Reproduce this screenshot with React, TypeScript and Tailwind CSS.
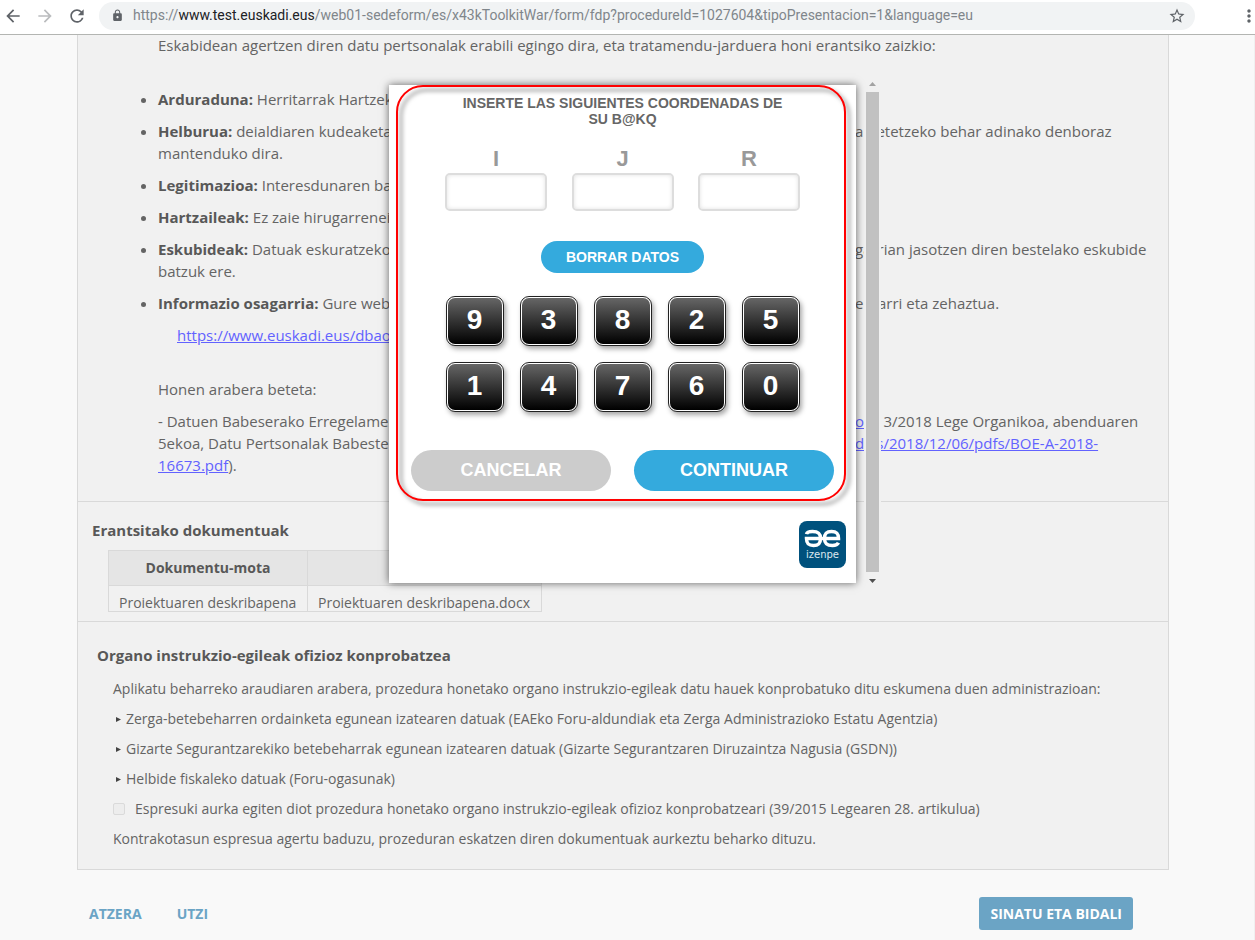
import type { ReactNode } from 'react'
import { MdArrowBack, MdArrowForward, MdRefresh, MdLock, MdStarBorder, MdMoreVert } from 'react-icons/md'

const coordinates = ['I', 'J', 'R']
const keypad = [9, 3, 8, 2, 5, 1, 4, 7, 6, 0]

const checks = [
  'Zerga-betebeharren ordainketa egunean izatearen datuak (EAEko Foru-aldundiak eta Zerga Administrazioko Estatu Agentzia)',
  'Gizarte Segurantzarekiko betebeharrak egunean izatearen datuak (Gizarte Segurantzaren Diruzaintza Nagusia (GSDN))',
  'Helbide fiskaleko datuak (Foru-ogasunak)',
]

function AddressBar() {
  return (
    <header className="flex h-[35px] items-center border-b border-[#b3b5b2] bg-white pb-[3px] text-[#5f6368]">
      <button type="button" aria-label="Back" className="ml-[3px] w-5">
        <MdArrowBack className="h-5 w-5" />
      </button>
      <button type="button" aria-label="Forward" className="ml-3 w-5 text-[#babcbe]">
        <MdArrowForward className="h-5 w-5" />
      </button>
      <button type="button" aria-label="Reload" className="ml-3 w-5">
        <MdRefresh className="h-5 w-5" />
      </button>
      <div className="ml-3 flex h-7 min-w-0 flex-1 items-center rounded-full bg-[#f1f3f4] pl-3 pr-[9px]">
        <MdLock className="h-[13px] w-[13px] shrink-0" />
        <span className="ml-[9px] flex-1 truncate font-[Roboto] text-[14px] text-[#80868b]">
          https://<span className="text-[#202124]">www.test.euskadi.eus</span>
          /web01-sedeform/es/x43kToolkitWar/form/fdp?procedureId=1027604&amp;tipoPresentacion=1&amp;language=eu
        </span>
        <button type="button" aria-label="Bookmark">
          <MdStarBorder className="h-[18px] w-[18px]" />
        </button>
      </div>
      <button type="button" aria-label="Menu" className="ml-11 mr-[-4px] w-5">
        <MdMoreVert className="h-5 w-5" />
      </button>
    </header>
  )
}

function Line({ left, children }: { left: ReactNode; children: ReactNode }) {
  return (
    <span className="flex whitespace-nowrap">
      <span className="w-[697px] shrink-0">{left}</span>
      <span>{children}</span>
    </span>
  )
}

function Term({ children }: { children: ReactNode }) {
  return <b className="font-bold text-[#585858]">{children}</b>
}

function PrivacyInfo() {
  return (
    <section className="border-b border-[#d9d9d9] pb-[25px] pl-20 pr-4 text-[15px] leading-[22px]">
      <p className="leading-5">
        Eskabidean agertzen diren datu pertsonalak erabili egingo dira, eta tratamendu-jarduera honi erantsiko zaizkio:
      </p>
      <ul className="mt-[33px] list-disc space-y-[10px]">
        <li>
          <Term>Arduraduna:</Term> Herritarrak Hartzek
        </li>
        <li>
          <Line left={<><Term>Helburua:</Term> deialdiaren kudeaketa</>}>
            a betetzeko behar adinako denboraz
          </Line>
          mantenduko dira.
        </li>
        <li>
          <Term>Legitimazioa:</Term> Interesdunaren ba
        </li>
        <li>
          <Term>Hartzaileak:</Term> Ez zaie hirugarrenei
        </li>
        <li>
          <Line left={<><Term>Eskubideak:</Term> Datuak eskuratzeko</>}>
            garrian jasotzen diren bestelako eskubide
          </Line>
          batzuk ere.
        </li>
        <li>
          <Line left={<><Term>Informazio osagarria:</Term> Gure web</>}>
            ehtarri eta zehaztua.
          </Line>
        </li>
      </ul>
      <p className="mt-[10px] pl-[19px]">
        <a href="#" className="text-[#6262ff] underline">https://www.euskadi.eus/dbao</a>
      </p>
      <p className="mt-8">Honen arabera beteta:</p>
      <div className="mt-[10px]">
        <Line left="- Datuen Babeserako Erregelame">
          <a href="#" className="text-[#6262ff] underline">oc</a>), 3/2018 Lege Organikoa, abenduaren
        </Line>
        <Line left="5ekoa, Datu Pertsonalak Babeste">
          <a href="#" className="text-[#6262ff] underline">dias/2018/12/06/pdfs/BOE-A-2018-</a>
        </Line>
        <a href="#" className="text-[#6262ff] underline">16673.pdf</a>).
      </div>
    </section>
  )
}

function Documents() {
  return (
    <section className="border-b border-[#d9d9d9] pb-[9px] pl-[14px] pt-[17px]">
      <h2 className="text-[15px] font-bold leading-[22px] text-[#585858]">Erantsitako dokumentuak</h2>
      <div className="ml-4 mt-[9px] h-[62px] w-[434px] overflow-hidden border-b border-[#d9d9d9]">
        <table className="w-full table-fixed border-collapse text-[14px] leading-5">
          <thead>
            <tr className="bg-[#e5e5e5] text-[#585858]">
              <th className="h-[35px] w-[199px] border border-[#d9d9d9] font-bold">Dokumentu-mota</th>
              <th className="border border-[#d9d9d9]"></th>
            </tr>
          </thead>
          <tbody>
            <tr>
              <td className="h-[35px] border border-[#d9d9d9] px-[10px]">Proiektuaren deskribapena</td>
              <td className="border border-[#d9d9d9] px-[10px]">Proiektuaren deskribapena.docx</td>
            </tr>
          </tbody>
        </table>
      </div>
    </section>
  )
}

function Verification() {
  return (
    <section className="pb-[15px] pl-[19px] pt-[22px]">
      <h2 className="text-[15px] font-bold leading-[22px] text-[#585858]">
        Organo instrukzio-egileak ofizioz konprobatzea
      </h2>
      <div className="ml-4 mt-2 text-[14px] leading-[30px]">
        <p>
          Aplikatu beharreko araudiaren arabera, prozedura honetako organo instrukzio-egileak datu hauek konprobatuko ditu
          eskumena duen administrazioan:
        </p>
        <ul>
          {checks.map((item) => (
            <li key={item} className="flex items-center pl-[3px]">
              <svg viewBox="0 0 5 5" className="mr-[5px] h-[5px] w-[5px] fill-[#444]">
                <path d="M0 0L5 2.5L0 5Z" />
              </svg>
              {item}
            </li>
          ))}
        </ul>
        <label className="flex items-center">
          <input
            type="checkbox"
            className="mr-[10px] h-3 w-3 appearance-none rounded-xs border border-[#dadada] bg-[#ededed]"
          />
          Espresuki aurka egiten diot prozedura honetako organo instrukzio-egileak ofizioz konprobatzeari (39/2015 Legearen
          28. artikulua)
        </label>
        <p>Kontrakotasun espresua agertu baduzu, prozeduran eskatzen diren dokumentuak aurkeztu beharko dituzu.</p>
      </div>
    </section>
  )
}

function IzenpeLogo() {
  return (
    <svg viewBox="0 0 47 47" className="h-[47px] w-[47px]" role="img" aria-label="izenpe">
      <rect width="47" height="47" rx="8" fill="#00517d" />
      <path
        d="M7.5 13.2C8 11 10 10.500 13.500 10.500C19.500 10.500 21.500 12.500 21.500 17.500C21.500 22.500 19.500 24.500 14.500 24.500C9.500 24.500 7.500 22.500 7.500 17.600H39.500C39.500 12.500 37.500 10.500 32.500 10.500C27.500 10.500 25.500 12.500 25.500 17.500C25.500 22.500 27.500 24.500 33.500 24.500C37 24.500 38.500 23.800 39.500 21.800"
        fill="none"
        stroke="#fff"
        strokeWidth="3.5"
      />
      <text x="23.5" y="37" textAnchor="middle" fill="#dce8ef" fontSize="10" fontWeight="400" fontFamily="DejaVu Sans">
        izenpe
      </text>
    </svg>
  )
}

function CoordinateDialog() {
  return (
    <div
      role="dialog"
      className="relative w-[467px] bg-white pb-[15px] pt-[10px] font-['Liberation_Sans',sans-serif] font-bold shadow-[0_0_8px_rgba(0,0,0,0.6)]"
    >
      <div className="pointer-events-none absolute left-[7px] top-0 h-[416px] w-[450px] rounded-[27px] border-2 border-[#f00] drop-shadow-[4px_4px_2px_rgba(0,0,0,0.5)]" />
      <p className="mx-auto w-[330px] text-center text-[14px] leading-4 text-[#666]">
        INSERTE LAS SIGUIENTES COORDENADAS DE SU B@KQ
      </p>
      <div className="mx-auto mt-5 flex w-[355px] justify-between">
        {coordinates.map((name) => (
          <label key={name} className="flex flex-col items-center text-[22px] leading-6 text-[#999]">
            {name}
            <input
              type="password"
              className="mt-[2px] h-[38px] w-[102px] rounded-[5px] border-2 border-[#ddd] bg-white px-2 shadow-[inset_0_0_4px_rgba(0,0,0,0.12)]"
            />
          </label>
        ))}
      </div>
      <button
        type="button"
        className="mx-auto mt-[30px] block h-8 w-[163px] rounded-full bg-[#34aadd] text-[14px] text-white"
      >
        BORRAR DATOS
      </button>
      <div className="mx-auto mt-[23px] grid w-[354px] grid-cols-5 gap-4">
        {keypad.map((digit) => (
          <button
            key={digit}
            type="button"
            className="h-[50px] rounded-[9px] border border-[#222] bg-white p-px shadow-[2px_3px_5px_rgba(0,0,0,0.35)]"
          >
            <span className="flex h-full items-center justify-center rounded-[7px] bg-linear-to-b/srgb from-[#666] to-black pb-[2px] text-[28px] leading-none text-white">
              {digit}
            </span>
          </button>
        ))}
      </div>
      <div className="mx-[22px] mt-[38px] flex justify-between text-[18px] text-white">
        <button type="button" className="h-[41px] w-[200px] rounded-full bg-[#ccc]">CANCELAR</button>
        <button type="button" className="h-[41px] w-[200px] rounded-full bg-[#34aadd]">CONTINUAR</button>
      </div>
      <div className="mr-[10px] mt-[30px] flex justify-end">
        <IzenpeLogo />
      </div>
    </div>
  )
}

function DialogScrollbar() {
  return (
    <div className="my-[-8px] flex w-[17px] flex-col items-center bg-[#f1f1f1] pb-1">
      <svg viewBox="0 0 17 15" className="h-[15px] w-[17px] fill-[#a3a3a3]">
        <path d="M5 9L8.5 5L12 9Z" />
      </svg>
      <div className="w-[13px] flex-1 bg-[#c1c1c1]" />
      <svg viewBox="0 0 17 15" className="h-[15px] w-[17px] fill-[#505050]">
        <path d="M5 7L8.5 11L12 7Z" />
      </svg>
    </div>
  )
}

export default function App() {
  return (
    <div className="relative bg-[#f9f9f9] font-['Open_Sans',sans-serif] text-[#646464]">
      <AddressBar />
      <main className="border-r border-[#f0f0f0] pb-[10px] pl-[77px] pr-[85px]">
        <div className="border border-t-0 border-[#d9d9d9] bg-[#f1f1f1]">
          <PrivacyInfo />
          <Documents />
          <Verification />
        </div>
        <div className="mt-[27px] flex items-center pl-3 pr-9 text-[14px] font-bold text-[#6ba4c5]">
          <a href="#">ATZERA</a>
          <a href="#" className="ml-[35px]">UTZI</a>
          <button type="button" className="ml-auto h-[33px] rounded-[3px] bg-[#6ba4c5] px-[11px] text-white">
            SINATU ETA BIDALI
          </button>
        </div>
      </main>
      <div className="absolute inset-x-0 top-[85px] flex justify-center gap-2 pl-[15px]">
        <CoordinateDialog />
        <DialogScrollbar />
      </div>
    </div>
  )
}
